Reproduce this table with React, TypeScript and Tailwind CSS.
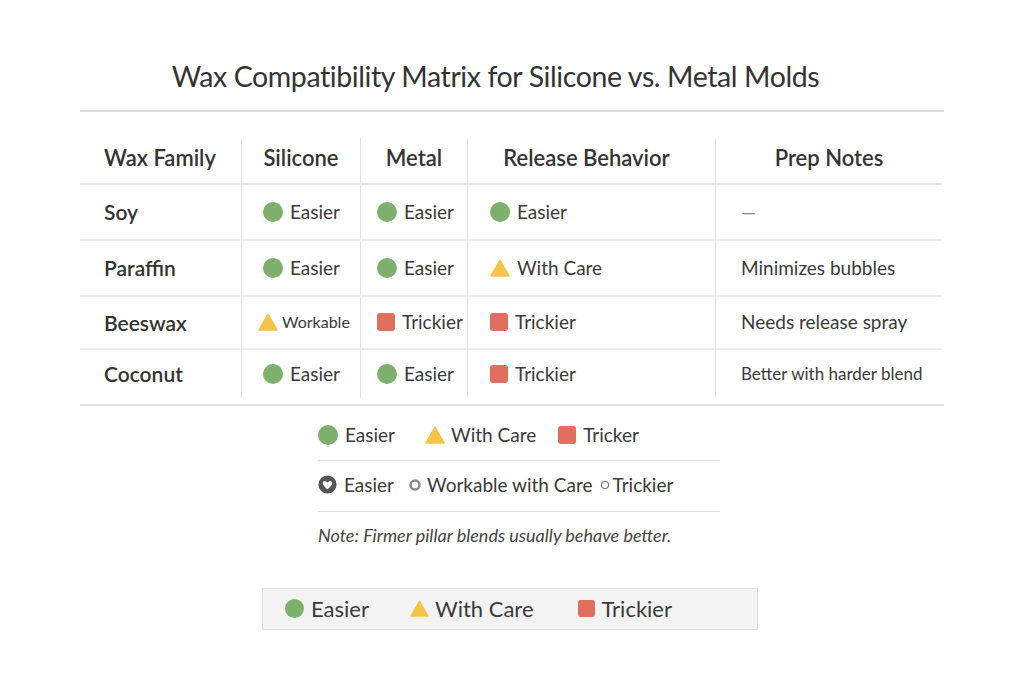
import React from "react";

type Level = "easy" | "care" | "hard";

const Mark = ({ level, size = 20 }: { level: Level; size?: number }) => {
  if (level === "easy")
    return <span className="inline-block shrink-0 rounded-full bg-[#7cb06c]" style={{ width: size, height: size }} />;
  if (level === "hard")
    return <span className="inline-block shrink-0 rounded-[3px] bg-[#e06f60]" style={{ width: size - 2, height: size - 2 }} />;
  return (
    <svg width={size} height={size - 2} viewBox="0 0 20 18" className="shrink-0">
      <path d="M10 1.5 L19 17 L1 17 Z" fill="#f6c445" stroke="#f6c445" strokeWidth="1.5" strokeLinejoin="round" />
    </svg>
  );
};

const Cell = ({ level, label, small }: { level: Level; label: string; small?: boolean }) => (
  <div className={`flex items-center ${small ? "-ml-[5px] gap-[4px]" : "gap-[7px]"}`}>
    <Mark level={level} />
    <span className={small ? "text-[16px]" : "text-[19px]"}>{label}</span>
  </div>
);

const rows: {
  name: string;
  silicone: [Level, string, boolean?];
  metal: [Level, string];
  release: [Level, string];
  note: string;
  smallNote?: boolean;
  h: string;
}[] = [
  { name: "Soy", silicone: ["easy", "Easier"], metal: ["easy", "Easier"], release: ["easy", "Easier"], note: "—", h: "h-[56px]" },
  { name: "Paraffin", silicone: ["easy", "Easier"], metal: ["easy", "Easier"], release: ["care", "With Care"], note: "Minimizes bubbles", h: "h-[56px]" },
  { name: "Beeswax", silicone: ["care", "Workable", true], metal: ["hard", "Trickier"], release: ["hard", "Trickier"], note: "Needs release spray", h: "h-[53px]" },
  { name: "Coconut", silicone: ["easy", "Easier"], metal: ["easy", "Easier"], release: ["hard", "Trickier"], note: "Better with harder blend", smallNote: true, h: "h-[48px]" },
];

const App = () => {
  return (
    <div className="h-[683px] w-[1024px] bg-white font-['Lato',sans-serif] text-[#3a3a3a]">
      <div className="flex flex-col items-center pr-[33px] pt-[55px]">
        <h1 className="text-[28.5px] font-normal tracking-[-0.4px] text-[#333]">
          Wax Compatibility Matrix for Silicone vs. Metal Molds
        </h1>
      </div>
      <div className="mx-[80px] mt-[12px] border-t-2 border-[#dedede]" />

      <div className="mx-[80px] mt-[26px] border-b-2 border-[#e4e4e4]">
        <div className="grid grid-cols-[161px_119px_107px_248px_227px]">
          <div className="flex h-[47px] items-center border-b-2 border-[#e8e8e8] pb-[6px] pl-[24px] text-[22px] font-semibold text-[#333]">Wax Family</div>
          <div className="flex h-[47px] items-center justify-center border-b-2 border-l border-[#e4e4e4] pb-[6px] text-[22px] font-semibold text-[#333]">Silicone</div>
          <div className="flex h-[47px] items-center justify-center border-b-2 border-l border-[#e4e4e4] pb-[6px] text-[22px] font-semibold text-[#333]">Metal</div>
          <div className="flex h-[47px] items-center justify-center border-b-2 border-l border-[#e4e4e4] pb-[6px] pr-[10px] text-[22px] font-semibold text-[#333]">Release Behavior</div>
          <div className="flex h-[47px] items-center justify-center border-b-2 border-l border-[#e4e4e4] pb-[6px] text-[22px] font-semibold text-[#333]">Prep Notes</div>

          {rows.map((r, i) => {
            const last = i === rows.length - 1;
            const rb = last ? "" : "border-b-2 border-b-[#ececec]";
            return (
              <React.Fragment key={r.name}>
                <div className={`flex ${r.h} items-center pl-[24px] text-[21px] font-semibold text-[#333] ${rb}`}>{r.name}</div>
                <div className={`flex ${r.h} items-center border-l border-l-[#e2e2e2] pl-[21px] ${rb}`}>
                  <Cell level={r.silicone[0]} label={r.silicone[1]} small={r.silicone[2]} />
                </div>
                <div className={`flex ${r.h} items-center border-l border-l-[#e2e2e2] pl-[16px] ${rb}`}>
                  <Cell level={r.metal[0]} label={r.metal[1]} />
                </div>
                <div className={`flex ${r.h} items-center border-l border-l-[#e2e2e2] pl-[22px] ${rb}`}>
                  <Cell level={r.release[0]} label={r.release[1]} />
                </div>
                <div className={`flex ${r.h} items-center border-l border-l-[#e2e2e2] pl-[25px] ${r.smallNote ? "text-[17px]" : "text-[19px]"} ${rb}`}>
                  {r.note === "—" ? <span className="text-[#888]">—</span> : r.note}
                </div>
              </React.Fragment>
            );
          })}
        </div>
        <div className="h-[6px]" />
      </div>

      <div className="mx-auto mt-[15px] w-[402px] translate-x-[7px]">
        <div className="flex h-[28px] items-center text-[19px]">
          <div className="flex items-center gap-[7px]"><Mark level="easy" /><span>Easier</span></div>
          <div className="ml-[30px] flex items-center gap-[6px]"><Mark level="care" /><span>With Care</span></div>
          <div className="ml-[22px] flex items-center gap-[7px]"><Mark level="hard" /><span>Tricker</span></div>
        </div>
        <div className="mt-[11px] border-t border-[#e2e2e2]" />
        <div className="mt-[10px] flex h-[28px] items-center text-[19px]">
          <div className="flex items-center gap-[7px]">
            <svg width="19" height="19" viewBox="0 0 20 20">
              <circle cx="10" cy="10" r="9.5" fill="#555" />
              <path d="M10 15 C6 12 5 10 5 8.5 C5 6.6 7.4 5.6 8.8 7 L10 8 L11.2 7 C12.6 5.6 15 6.6 15 8.5 C15 10 14 12 10 15 Z" fill="#fff" />
            </svg>
            <span>Easier</span>
          </div>
          <div className="ml-[15px] flex items-center gap-[6px]">
            <svg width="12" height="12" viewBox="0 0 12 12">
              <circle cx="6" cy="6" r="4.5" fill="none" stroke="#888" strokeWidth="2.5" />
            </svg>
            <span>Workable with Care</span>
          </div>
          <div className="ml-[7px] flex items-center gap-[3px]">
            <svg width="10" height="10" viewBox="0 0 10 10">
              <circle cx="5" cy="5" r="3.5" fill="none" stroke="#777" strokeWidth="1.2" />
            </svg>
            <span>Trickier</span>
          </div>
        </div>
        <div className="mt-[12px] border-t border-[#e2e2e2]" />
        <p className="mt-[10px] text-[18px] italic text-[#444]">Note: Firmer pillar blends usually behave better.</p>
      </div>

      <div className="mx-auto mt-[39px] flex h-[42px] w-[496px] translate-x-[-2px] items-center border border-[#e0e0e0] bg-[#f3f3f3] pl-[22px] text-[22px] text-[#3a3a3a]">
        <div className="flex items-center gap-[7px]"><Mark level="easy" size={19} /><span>Easier</span></div>
        <div className="ml-[41px] flex items-center gap-[6px]"><Mark level="care" size={19} /><span>With Care</span></div>
        <div className="ml-[44px] flex items-center gap-[7px]"><Mark level="hard" size={19} /><span>Trickier</span></div>
      </div>
    </div>
  );
};

export default App;
